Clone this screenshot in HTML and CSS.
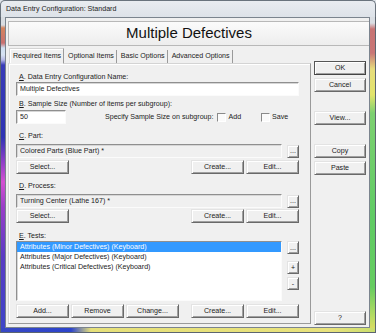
FILE: index.html
```html
<!DOCTYPE html>
<html lang="en">
<head>
    <meta charset="UTF-8">
    <meta name="viewport" content="width=device-width, initial-scale=1.0">
    <title>Data Entry Configuration: Standard</title>
    <link rel="stylesheet" href="styles.css">
</head>
<body>
    <div class="window">
        <div class="titlebar">Data Entry Configuration: Standard</div>
        <div class="edge edge-left"></div>

        <div class="client">
            <div class="banner">Multiple Defectives</div>

            <div class="main">
                <div class="tabarea">
                    <div class="tabs">
                        <span class="tab active">Required Items</span>
                        <span class="tab">Optional Items</span>
                        <span class="tab">Basic Options</span>
                        <span class="tab">Advanced Options</span>
                    </div>

                    <div class="panel">
                        <label class="lbl lbl-a" for="configName"><u>A</u>. Data Entry Configuration Name:</label>
                        <input class="field" type="text" id="configName" value="Multiple Defectives">

                        <label class="lbl lbl-b" for="sampleSize"><u>B</u>. Sample Size (Number of items per subgroup):</label>
                        <div class="row row-b">
                            <input class="field field-small" type="text" id="sampleSize" value="50">
                            <span class="specify">Specify Sample Size on subgroup:</span>
                            <span class="check"></span><span class="check-text">Add</span>
                            <span class="check check-save"></span><span class="check-text">Save</span>
                        </div>

                        <label class="lbl lbl-c" for="part"><u>C</u>. Part:</label>
                        <div class="row row-c">
                            <input class="field readonly" type="text" id="part" value="Colored Parts (Blue Part) *" readonly>
                            <button class="btn btn-dots">...</button>
                        </div>
                        <div class="btnrow btnrow-c">
                            <div class="group"><button class="btn">Select...</button></div>
                            <div class="group"><button class="btn">Create...</button><button class="btn">Edit...</button></div>
                        </div>

                        <label class="lbl lbl-d" for="process"><u>D</u>. Process:</label>
                        <div class="row row-d">
                            <input class="field readonly" type="text" id="process" value="Turning Center (Lathe 167) *" readonly>
                            <button class="btn btn-dots">...</button>
                        </div>
                        <div class="btnrow btnrow-d">
                            <div class="group"><button class="btn">Select...</button></div>
                            <div class="group"><button class="btn">Create...</button><button class="btn">Edit...</button></div>
                        </div>

                        <div class="lbl lbl-e"><u>E</u>. Tests:</div>
                        <div class="row row-e">
                            <ul class="list">
                                <li class="selected">Attributes (Minor Defectives) (Keyboard)</li>
                                <li>Attributes (Major Defectives) (Keyboard)</li>
                                <li>Attributes (Critical Defectives) (Keyboard)</li>
                            </ul>
                            <div class="listbtns">
                                <button class="btn btn-dots">...</button>
                                <button class="btn btn-dots btn-plus">+</button>
                                <button class="btn btn-dots btn-minus">-</button>
                            </div>
                        </div>
                        <div class="btnrow btnrow-e">
                            <div class="group"><button class="btn">Add...</button><button class="btn">Remove</button><button class="btn">Change...</button></div>
                            <div class="group"><button class="btn">Create...</button><button class="btn">Edit...</button></div>
                        </div>
                    </div>
                </div>

                <div class="side">
                    <button class="btn btn-default">OK</button>
                    <button class="btn btn-cancel">Cancel</button>
                    <button class="btn btn-view">View...</button>
                    <button class="btn btn-copy">Copy</button>
                    <button class="btn btn-paste">Paste</button>
                    <button class="btn btn-help">?</button>
                </div>
            </div>
        </div>

        <div class="edge edge-right"></div>
        <div class="edge edge-bottom"></div>
    </div>
</body>
</html>
```

FILE: styles.css
```css
* {
    box-sizing: border-box;
}
body {
    margin: 0;
    font-family: "Liberation Sans", Arial, sans-serif;
    font-size: 7.1px;
    color: #1c1c1c;
    background: #dfe3e8;
}
.window {
    width: 376px;
    height: 333px;
    display: grid;
    grid-template-columns: 5px 365px 6px;
    grid-template-rows: 17px 311px 5px;
}
.titlebar {
    grid-column: 1 / 4;
    padding-left: 5px;
    line-height: 16px;
    color: #222;
    background: linear-gradient(#e9ecf0, #dde2e8);
    border: 1px solid #6a737d;
    border-bottom: none;
    border-radius: 5px 5px 0 0;
}
.edge-left {
    border-left: 1px solid #5c6570;
    background: linear-gradient(#d9dde2 0, #d9dde2 8px, #d4845e 11px, #c87070 26px, #cfe0f2 31px, #d7e2f2 38px, #b4b6e6 43px, #3a3cb8 48px, #2f34b4 120px, #9040c8 145px, #d452d2 165px, #9a3ec8 190px, #5a3cc4 240px, #3f46c8 311px);
}
.edge-right {
    border-right: 1px solid #5c6570;
    background: linear-gradient(#dadee3 0, #dadee3 6px, #c87474 12px, #c97676 36px, #e6dc7c 52px, #e2e46a 78px, #7dd070 96px, #60cb64 200px, #66cc60 270px, #b8dc62 300px, #d8dc62 311px);
}
.edge-bottom {
    grid-column: 1 / 4;
    border: 1px solid #5c6570;
    border-top: none;
    background: linear-gradient(to right, #3848c4 0, #2c44cc 70px, #e6e07a 90px, #e8e27c 330px, #c8de6c 376px);
}
.client {
    border: 1px solid #7b848e;
    background: #f0f0f0;
    display: flex;
    flex-direction: column;
}
.banner {
    margin: 3px 0 0 2px;
    height: 25px;
    border: 1px solid #b8b8b8;
    border-right: none;
    background: linear-gradient(#fbfbfb, #ededed);
    font-size: 15px;
    line-height: 22px;
    text-align: center;
    color: #111;
}
.main {
    display: flex;
    flex: 1;
}
.tabarea {
    margin: 2px 0 0 2px;
}
.tabs {
    display: flex;
    align-items: flex-end;
    height: 15px;
    padding-left: 1px;
}
.tab {
    height: 13px;
    line-height: 12px;
    padding: 0 2px 0 4px;
    border-right: 1px solid #9a9a9a;
}
.tab.active {
    position: relative;
    z-index: 1;
    height: 16px;
    margin-bottom: -1px;
    line-height: 15px;
    padding: 0 2px 0 3px;
    border: 1px solid;
    border-color: #d4d4d4 #9a9a9a transparent #d4d4d4;
    background: #f0f0f0;
    box-shadow: inset 1px 1px #fff;
}
.panel {
    width: 303px;
    height: 261px;
    padding: 0 11px 0 7px;
    border: 1px solid;
    border-color: #d4d4d4 #9a9a9a #9a9a9a #d4d4d4;
    box-shadow: inset 1px 1px #fff;
    display: flex;
    flex-direction: column;
}
.lbl {
    display: block;
    height: 10px;
    line-height: 10px;
    padding-left: 3px;
}
.lbl-a { margin-top: 8px; }
.lbl-b { margin-top: 3px; }
.lbl-c { margin-top: 7px; }
.lbl-d { margin-top: 7px; }
.lbl-e { margin-top: 8px; }
.field {
    height: 14px;
    width: 100%;
    margin: 0;
    padding: 0 0 0 3px;
    font: inherit;
    color: inherit;
    background: #fff;
    border: 1px solid;
    border-color: #8f8f8f #fbfbfb #fbfbfb #8f8f8f;
    box-shadow: inset 1px 1px #d6d6d6;
    outline: none;
}
.field.readonly {
    background: #f0f0f0;
}
.field-small {
    width: 50px;
    flex: none;
}
.row {
    display: flex;
    align-items: center;
}
.row-b { margin-top: 1px; }
.row-c, .row-d { margin-top: 3px; gap: 5px; }
.specify {
    margin-left: 39px;
    white-space: nowrap;
}
.check {
    flex: none;
    width: 9px;
    height: 9px;
    margin-left: 4px;
    border: 1px solid;
    border-color: #8a8a8a #fff #fff #8a8a8a;
    background: #fafafa;
}
.check-save {
    margin-left: 20px;
}
.check-text {
    margin-left: 2px;
}
.btn {
    height: 14px;
    width: 53px;
    margin: 0;
    padding: 0;
    font: inherit;
    color: inherit;
    line-height: 12px;
    text-align: center;
    background: #f0f0f0;
    border: 1px solid;
    border-color: #e3e3e3 #696969 #696969 #e3e3e3;
    box-shadow: inset 1px 1px #fff, inset -1px -1px #a0a0a0;
}
.btn-dots {
    flex: none;
    width: 12px;
    height: 13px;
    line-height: 10px;
}
.btnrow {
    display: flex;
    justify-content: space-between;
}
.btnrow .group {
    display: flex;
    gap: 2px;
}
.btnrow-c { margin-top: 2px; }
.btnrow-d { margin-top: 1px; }
.btnrow-e { margin-top: 3px; }
.row-e {
    align-items: flex-start;
    gap: 5px;
}
.list {
    flex: 1;
    height: 60px;
    margin: 0;
    padding: 0;
    list-style: none;
    background: #fff;
    border: 1px solid;
    border-color: #8f8f8f #fbfbfb #fbfbfb #8f8f8f;
    box-shadow: inset 1px 1px #d6d6d6;
}
.list li {
    height: 10px;
    line-height: 10px;
    padding-left: 3px;
}
.list li.selected {
    background: #3399ff;
    color: #fff;
}
.listbtns {
    display: flex;
    flex-direction: column;
}
.btn-plus { margin-top: 7px; }
.btn-minus { margin-top: 3px; }
.side {
    margin-left: 3px;
    display: flex;
    flex-direction: column;
}
.side .btn {
    width: 52px;
}
.btn-default {
    margin-top: 15px;
    border-color: #555 #444 #444 #555;
}
.btn-cancel { margin-top: 3px; }
.btn-view { margin-top: 19px; }
.btn-copy { margin-top: 19px; }
.btn-paste { margin-top: 3px; }
.btn-help { margin-top: 136px; }
```
